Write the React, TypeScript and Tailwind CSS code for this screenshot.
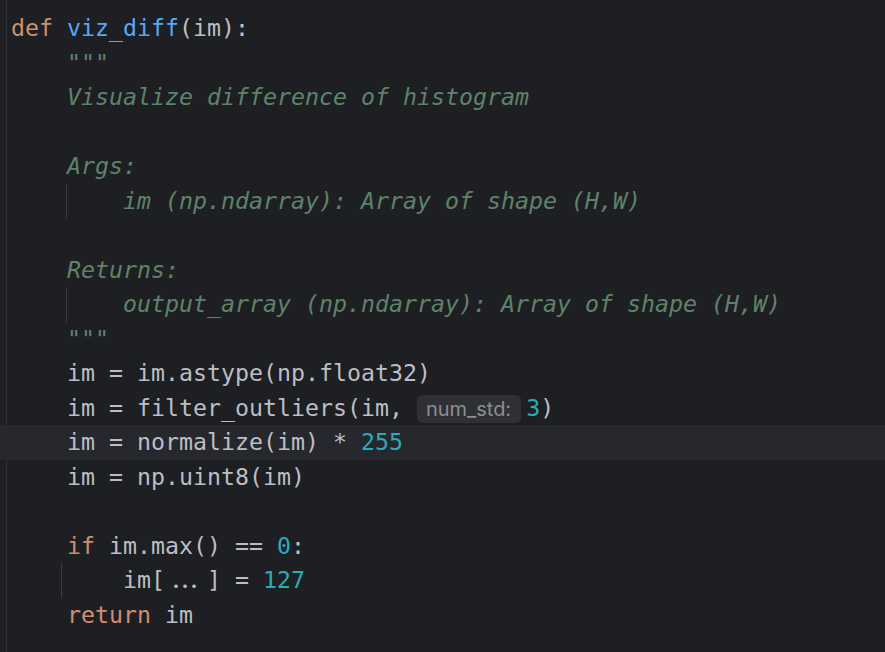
import React from "react";

const K = ({ children }: { children: React.ReactNode }) => <span className="text-[#cf8e6d]">{children}</span>;
const F = ({ children }: { children: React.ReactNode }) => <span className="text-[#56a8f5]">{children}</span>;
const N = ({ children }: { children: React.ReactNode }) => <span className="text-[#2aacb8]">{children}</span>;
const D = ({ children }: { children: React.ReactNode }) => <span className="italic text-[#5f826b]">{children}</span>;

function Line({
  children,
  active,
  guide,
}: {
  children?: React.ReactNode;
  active?: boolean;
  guide?: "a" | "b";
}) {
  return (
    <div className={`relative h-[34.5px] flex items-center whitespace-pre pl-[11px] ${active ? "bg-[#26282e]" : ""}`}>
      {guide === "a" && <span className="absolute left-[66px] top-0 bottom-0 w-px bg-[#393b40]" />}
      {guide === "b" && <span className="absolute left-[61px] top-0 bottom-0 w-px bg-[#393b40]" />}
      <span className="relative">{children}</span>
    </div>
  );
}

export default function App() {
  return (
    <div
      className="relative w-[885px] h-[652px] overflow-hidden bg-[#1e1f22] text-[#bcbec4] text-[23.25px] leading-[34.5px]"
      style={{ fontFamily: '"DejaVu Sans Mono", "Liberation Mono", monospace' }}
    >
      <div className="absolute left-[6px] top-0 bottom-0 w-px bg-[#313235]" />
      <div className="pt-[11px]">
        <Line>
          <K>def</K> <F>viz_diff</F>(im):
        </Line>
        <Line>
          {"    "}
          <D>"""</D>
        </Line>
        <Line>
          {"    "}
          <D>Visualize difference of histogram</D>
        </Line>
        <Line />
        <Line>
          {"    "}
          <D>Args:</D>
        </Line>
        <Line guide="a">
          {"        "}
          <D>im (np.ndarray): Array of shape (H,W)</D>
        </Line>
        <Line />
        <Line>
          {"    "}
          <D>Returns:</D>
        </Line>
        <Line guide="a">
          {"        "}
          <D>output_array (np.ndarray): Array of shape (H,W)</D>
        </Line>
        <Line>
          {"    "}
          <D>"""</D>
        </Line>
        <Line>{"    im = im.astype(np.float32)"}</Line>
        <Line>
          {"    im = filter_outliers(im, "}
          <span
            className="inline-flex items-center h-[28px] pl-[9px] pr-[10px] mr-[5px] rounded-[5px] bg-[#2f3033] text-[#8b8e94] text-[20px] align-middle"
            style={{ fontFamily: "Inter, 'Noto Sans', sans-serif" }}
          >
            num_std:
          </span>
          <N>3</N>)
        </Line>
        <Line active>
          {"    im = normalize(im) * "}
          <N>255</N>
        </Line>
        <Line>{"    im = np.uint8(im)"}</Line>
        <Line />
        <Line>
          {"    "}
          <K>if</K> im.max() == <N>0</N>:
        </Line>
        <Line guide="b">
          {"        im["}
          <span
            className="inline-block w-[42px] text-center text-[21px] font-bold tracking-[2px]"
            style={{ fontFamily: "Inter, 'Noto Sans', sans-serif" }}
          >
            ...
          </span>
          {"] = "}
          <N>127</N>
        </Line>
        <Line>
          {"    "}
          <K>return</K> im
        </Line>
      </div>
    </div>
  );
}
